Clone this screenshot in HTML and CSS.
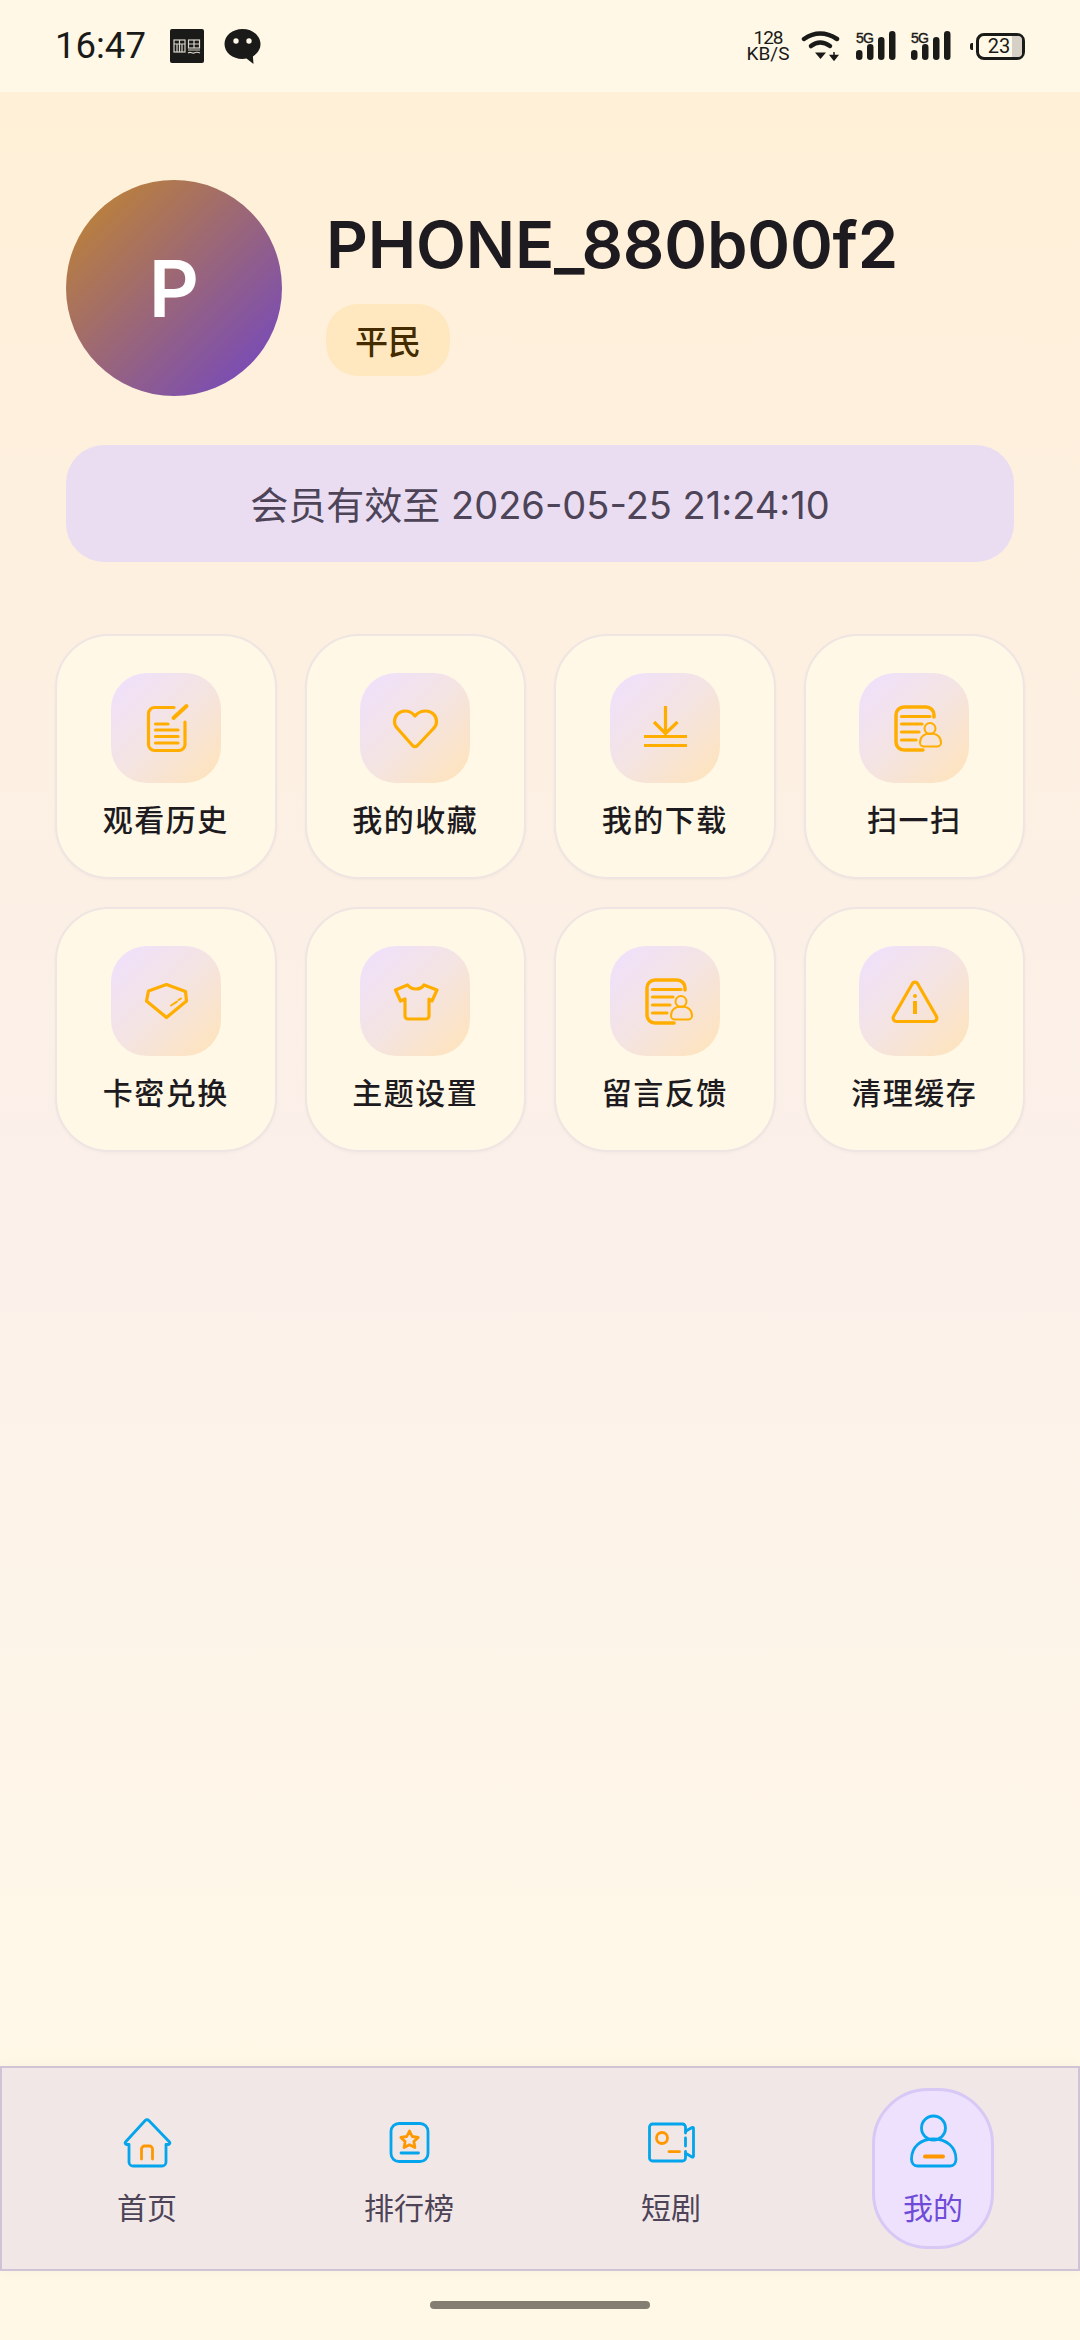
FILE: index.html
```html
<!DOCTYPE html>
<html lang="zh-CN">

<head>
    <meta charset="UTF-8">
    <meta name="viewport" content="width=device-width, initial-scale=1.0">
    <title>我的</title>
    <link rel="stylesheet" href="styles.css">
</head>

<body>
    <div class="page">
        <!-- status bar -->
        <header class="status">
            <div class="status-left">
                <span class="time">16:47</span>
                <svg class="news-app" viewBox="0 0 34 34" width="34" height="34">
                    <rect width="34" height="34" rx="2" fill="#1a1a18" />
                    <g fill="none" stroke="#d8d4ca" stroke-width="1.2">
                        <rect x="4" y="11" width="11" height="12" />
                        <path d="M4 15h11M9.500 11v12M7 15v8M12 15v8" />
                        <rect x="18.500" y="11" width="11" height="8" />
                        <path d="M18.500 15h11M24 11v8M18 21h12M18 24c3-2 4 1 6 0s4-1 6 0" />
                    </g>
                </svg>
                <svg class="chat-app" viewBox="0 0 36 35" width="37" height="35">
                    <path d="M18 0C8 0 0 6.600 0 15s8 15 18 15c1.500 0 2.700-.1 4-.4L29 35l-.6-7.600C33 24.700 36 20.100 36 15 36 6.600 28 0 18 0z" fill="#1a1a18" />
                    <circle cx="11.500" cy="12" r="2.700" fill="#fff8e7" />
                    <circle cx="24.500" cy="12" r="2.700" fill="#fff8e7" />
                </svg>
            </div>
            <div class="status-right">
                <div class="speed"><span>128</span><span>KB/S</span></div>
                <svg viewBox="0 0 40 30" width="40" height="30">
                    <g fill="none" stroke="#1a1a18" stroke-linecap="round">
                        <path d="M3 8Q19-3 36 8" stroke-width="4.500" />
                        <path d="M10 15Q19 8 29 15" stroke-width="4.500" />
                    </g>
                    <path d="M14 21.500h11L19.500 28z" fill="#1a1a18" />
                    <path d="M33 21v4M29.500 24.500h7L33 29z" fill="#1a1a18" stroke="#1a1a18" stroke-width="1.500" />
                </svg>
                <svg class="signal" viewBox="0 0 40 30" width="40" height="30">
                    <text class="net" x="0" y="12">5G</text>
                    <g fill="#1a1a18">
                        <rect x="0" y="19" width="6.500" height="10" rx="3.200" />
                        <rect x="11" y="13" width="6.500" height="16" rx="3.200" />
                        <rect x="22" y="6" width="6.500" height="23" rx="3.200" />
                        <rect x="33" y="0" width="6.500" height="29" rx="3.200" />
                    </g>
                </svg>
                <svg class="signal" viewBox="0 0 40 30" width="40" height="30">
                    <text class="net" x="0" y="12">5G</text>
                    <g fill="#1a1a18">
                        <rect x="0" y="19" width="6.500" height="10" rx="3.200" />
                        <rect x="11" y="13" width="6.500" height="16" rx="3.200" />
                        <rect x="22" y="6" width="6.500" height="23" rx="3.200" />
                        <rect x="33" y="0" width="6.500" height="29" rx="3.200" />
                    </g>
                </svg>
                <div class="battery"><span class="battery-fill"></span><span class="battery-num">23</span></div>
            </div>
        </header>

        <main class="content">
            <section class="profile">
                <div class="avatar">P</div>
                <div class="profile-info">
                    <h1 class="name">PHONE_880b00f2</h1>
                    <span class="rank-chip">平民</span>
                </div>
            </section>

            <div class="vip-bar">会员有效至 2026-05-25 21:24:10</div>

            <section class="grid">
                <div class="card">
                    <div class="tile">
                        <svg class="tile-icon" viewBox="0 0 110 110">
                            <path d="M63 34.500H43.500a6 6 0 0 0-6 6V71.500a6 6 0 0 0 6 6H68a6 6 0 0 0 6-6V49" />
                            <path d="M62.500 45L75.500 33" class="thick" />
                            <path d="M44.500 51H57M44.500 57H67M44.500 63.500H67M44.500 70H67" />
                        </svg>
                    </div>
                    <span class="card-label">观看历史</span>
                </div>
                <div class="card">
                    <div class="tile">
                        <svg class="tile-icon" viewBox="0 0 110 110">
                            <path d="M55 43c-3-4-7-5-10-5-6 0-10.500 5-10.500 10.500 0 3 1 5 3 7L52.500 72.500c1.500 1.400 3.500 1.400 5 0L73.500 55.500c2-2 3-4 3-7C76.500 43 72 38 66 38c-3 0-8 1-11 5z" />
                        </svg>
                    </div>
                    <span class="card-label">我的收藏</span>
                </div>
                <div class="card">
                    <div class="tile">
                        <svg class="tile-icon" viewBox="0 0 110 110">
                            <path d="M55.500 33V61M44 49L55.500 60.500L67.500 49M34 63.500H77M34 72.500H77" stroke-linecap="butt" />
                        </svg>
                    </div>
                    <span class="card-label">我的下载</span>
                </div>
                <div class="card">
                    <div class="tile">
                        <svg class="tile-icon" viewBox="0 0 110 110">
                            <path d="M75 44v-2a8 8 0 0 0-8-8H45a8 8 0 0 0-8 8V69a8 8 0 0 0 8 8H64" class="mid" />
                            <path d="M42.500 43.500H71M42.500 51H63M42.500 59H60M42.500 67H57" />
                            <circle cx="71" cy="55.500" r="5.500" class="thin" />
                            <path d="M61 70c0-6 4-9.500 10.500-9.500S82 64 82 70c0 2-2 3.500-4 3.500H65c-2 0-4-1.500-4-3.500z" class="thin" />
                        </svg>
                    </div>
                    <span class="card-label">扫一扫</span>
                </div>
                <div class="card">
                    <div class="tile">
                        <svg class="tile-icon" viewBox="0 0 110 110">
                            <path d="M55.500 38.500L74.500 45.500L75.500 55L55.500 71.500L35.500 55L37.500 45z" />
                            <path d="M60 59.500L66 55.700M67.500 54L70 52.500" class="thin" />
                        </svg>
                    </div>
                    <span class="card-label">卡密兑换</span>
                </div>
                <div class="card">
                    <div class="tile">
                        <svg class="tile-icon" viewBox="0 0 110 110">
                            <path d="M47.500 39L35.500 44L40.500 55L45 53V70a3 3 0 0 0 3 3H66a3 3 0 0 0 3-3V53L72 55L77 44L64 39c-2 3-5 4-8 4s-6-1-8.500-4z" />
                        </svg>
                    </div>
                    <span class="card-label">主题设置</span>
                </div>
                <div class="card">
                    <div class="tile">
                        <svg class="tile-icon" viewBox="0 0 110 110">
                            <path d="M75 44v-2a8 8 0 0 0-8-8H45a8 8 0 0 0-8 8V69a8 8 0 0 0 8 8H64" class="mid" />
                            <path d="M42.500 43.500H71M42.500 51H63M42.500 59H60M42.500 67H57" />
                            <circle cx="71" cy="55.500" r="5.500" class="thin" />
                            <path d="M61 70c0-6 4-9.500 10.500-9.500S82 64 82 70c0 2-2 3.500-4 3.500H65c-2 0-4-1.500-4-3.500z" class="thin" />
                        </svg>
                    </div>
                    <span class="card-label">留言反馈</span>
                </div>
                <div class="card">
                    <div class="tile">
                        <svg class="tile-icon" viewBox="0 0 110 110">
                            <path d="M53.500 37.500a3 3 0 0 1 5 0L77.500 70.500a3.500 3.500 0 0 1-3 5H37.500a3.500 3.500 0 0 1-3-5z" />
                            <path d="M56 55V68" class="thick" stroke-linecap="butt" />
                            <circle cx="56" cy="50" r="2" class="dot" />
                        </svg>
                    </div>
                    <span class="card-label">清理缓存</span>
                </div>
            </section>
        </main>

        <nav class="nav">
            <div class="nav-item">
                <svg class="nav-icon" viewBox="0 0 60 60">
                    <path d="M28.200 7.500a2.500 2.500 0 0 1 3.600 0L52.500 29a1.500 1.500 0 0 1-1 2.500H49V49a4 4 0 0 1-4 4H16a4 4 0 0 1-4-4V31.500H9.500a1.500 1.500 0 0 1-1-2.500z" />
                    <path class="accent" d="M24.500 46V36a3 3 0 0 1 3-3h5a3 3 0 0 1 3 3V46" />
                </svg>
                <span>首页</span>
            </div>
            <div class="nav-item">
                <svg class="nav-icon" viewBox="0 0 60 60">
                    <rect x="12" y="10.500" width="37" height="38" rx="8" />
                    <path class="accent" d="M30.500 18l2.700 5.500 6 .9-4.300 4.200 1 6-5.400-2.800-5.400 2.800 1-6-4.300-4.200 6-.9z" />
                    <path d="M22 40H39.500" />
                </svg>
                <span>排行榜</span>
            </div>
            <div class="nav-item">
                <svg class="nav-icon" viewBox="0 0 60 60">
                    <path d="M44.500 20V14a3 3 0 0 0-3-3H11.500a3 3 0 0 0-3 3V45a3 3 0 0 0 3 3H41.500a3 3 0 0 0 3-3V38.500M44.500 25V33" />
                    <path d="M45 18L51 14.500a1 1 0 0 1 1.500 1V43a1 1 0 0 1-1.500 1L45 40.500" />
                    <circle class="accent" cx="21" cy="25" r="5.500" />
                    <path class="accent" d="M28 38.700H38.500" />
                </svg>
                <span>短剧</span>
            </div>
            <div class="nav-item">
                <div class="nav-pill">
                    <svg class="nav-icon" viewBox="0 0 60 60">
                        <circle cx="30.500" cy="15" r="12" />
                        <path d="M8.500 46c0-12 9-20 22-20s22.500 8 22.500 20c0 4-2 7-6 7H14.500c-4 0-6-3-6-7z" />
                        <path class="accent" d="M22 43.500H40" stroke-width="4" />
                    </svg>
                    <span>我的</span>
                </div>
            </div>
        </nav>

        <footer class="gesture">
            <span class="gesture-bar"></span>
        </footer>
    </div>
</body>

</html>
```

FILE: styles.css
```css
* {
    margin: 0;
    padding: 0;
    box-sizing: border-box;
}

body {
    font-family: Inter, "Noto Sans CJK SC", sans-serif;
    background: #fff8e7;
    color: #1d1b20;
}

.page {
    width: 1080px;
    height: 2340px;
    display: flex;
    flex-direction: column;
    overflow: hidden;
}

/* status bar */
.status {
    height: 92px;
    flex: none;
    display: flex;
    align-items: center;
    justify-content: space-between;
    padding: 0 55px;
    background: #fff8e7;
    color: #1a1a18;
}

.status-left {
    display: flex;
    align-items: center;
    gap: 20px;
}

.time {
    width: 95px;
    font-family: Roboto, sans-serif;
    font-size: 36.500px;
    line-height: 44px;
}

.status-right {
    display: flex;
    align-items: center;
    gap: 15px;
}

.speed {
    width: 42px;
    margin-right: -3px;
    display: flex;
    flex-direction: column;
    align-items: center;
    font-family: Roboto, sans-serif;
    font-size: 19px;
    line-height: 16px;
}

.speed span:first-child {
    letter-spacing: -1px;
}

.signal {
    overflow: visible;
}

.net {
    font-family: "Liberation Sans", sans-serif;
    font-size: 14px;
    letter-spacing: -.8px;
    fill: #1a1a18;
    stroke: #1a1a18;
    stroke-width: .4px;
}

.battery {
    width: 49px;
    height: 27px;
    margin-left: 10px;
    position: relative;
    display: flex;
    align-items: center;
    justify-content: center;
    border: 3px solid #1a1a18;
    border-radius: 8px;
    font-family: Roboto, sans-serif;
    font-size: 20px;
}

/* the little nub on the left of the battery */
.battery::before {
    content: '';
    position: absolute;
    left: -9px;
    top: 7px;
    width: 3px;
    height: 7px;
    border-radius: 2px 0 0 2px;
    background: #1a1a18;
}

.battery-fill {
    position: absolute;
    right: 0;
    top: 0;
    bottom: 0;
    width: 10px;
    background: #d6d0c6;
    border-radius: 0 4px 4px 0;
}

.battery-num {
    position: relative;
    margin-right: 3px;
}

/* main */
.content {
    flex: 1;
    padding: 88px 55px 0;
    background: linear-gradient(180deg, #fff0d7 0%, #fbf0ea 55%, #fff8e7 100%);
}

.profile {
    display: flex;
    align-items: flex-start;
    gap: 44px;
    margin: 0 11px 49px;
}

.avatar {
    width: 216px;
    height: 216px;
    flex: none;
    display: flex;
    align-items: center;
    justify-content: center;
    border-radius: 50%;
    background: linear-gradient(135deg, #c4882a 0%, #7044c8 100%);
    color: #fff;
    font-size: 78px;
    font-weight: 600;
}

.profile-info {
    display: flex;
    flex-direction: column;
    align-items: flex-start;
    gap: 17px;
    padding-top: 23px;
}

.name {
    font-size: 65px;
    line-height: 84px;
    font-weight: 600;
    letter-spacing: -.2px;
    color: #1d1b20;
}

.rank-chip {
    height: 72px;
    display: flex;
    align-items: center;
    padding: 0 29px;
    border-radius: 32px;
    background: #ffe8bf;
    color: #442b00;
    font-size: 33px;
    font-weight: 500;
}

.vip-bar {
    height: 117px;
    margin: 0 11px 72px;
    padding-bottom: 2px;
    display: flex;
    align-items: center;
    justify-content: center;
    border-radius: 38px;
    background: #eaddf2;
    color: #4d4458;
    font-size: 38px;
}

.grid {
    display: grid;
    grid-template-columns: repeat(4, 1fr);
    grid-auto-rows: 245px;
    gap: 28px;
}

.card {
    display: flex;
    flex-direction: column;
    align-items: center;
    padding-top: 37px;
    border: 2px solid #efe5e2;
    border-radius: 54px;
    background: #fff8e7;
    box-shadow: 0 1px 3px rgba(80, 50, 60, .04);
}

.tile {
    width: 110px;
    height: 110px;
    border-radius: 36px;
    background: linear-gradient(135deg, #efe0ff 0%, #f4e4e2 50%, #ffe3b8 100%);
}

.tile-icon {
    display: block;
    width: 110px;
    height: 110px;
    fill: none;
    stroke: #ffae00;
    stroke-width: 3.200;
    stroke-linecap: round;
    stroke-linejoin: round;
}

.tile-icon .thick {
    stroke-width: 4;
}

.tile-icon .mid {
    stroke-width: 3.500;
}

.tile-icon .thin {
    stroke-width: 2;
}

.tile-icon .dot {
    fill: #ffae00;
    stroke: none;
}

.card-label {
    margin-top: 15px;
    font-size: 30px;
    line-height: 44px;
    font-weight: 500;
    letter-spacing: 1.500px;
    color: #1d1b20;
}

/* bottom navigation */
.nav {
    height: 205px;
    flex: none;
    display: flex;
    padding: 0 14px;
    border: 2px solid #cfc3d6;
    background: #f1e7e6;
    box-shadow: 0 0 12px rgba(120, 90, 60, .05);
}

.nav-item {
    flex: 1;
    display: flex;
    flex-direction: column;
    align-items: center;
    padding-top: 20px;
    color: #4d4458;
    font-size: 30px;
    line-height: 40px;
}

.nav-item span {
    margin-top: 15px;
}

.nav-icon {
    display: block;
    width: 60px;
    height: 60px;
    margin-top: 25px;
    fill: none;
    stroke: #04a5ec;
    stroke-width: 2.800;
    stroke-linecap: round;
    stroke-linejoin: round;
}

.nav-icon .accent {
    stroke: #ff9800;
}

.nav-pill {
    width: 122px;
    height: 161px;
    display: flex;
    flex-direction: column;
    align-items: center;
    border: 3px solid #d7c8f5;
    border-radius: 56px;
    background: #ede1fd;
    color: #6f4bd8;
}

.nav-pill .nav-icon {
    margin-top: 22px;
}

.gesture {
    height: 69px;
    flex: none;
    display: flex;
    justify-content: center;
    padding-top: 30px;
}

.gesture-bar {
    width: 220px;
    height: 8px;
    border-radius: 4px;
    background: #837d72;
}
```
